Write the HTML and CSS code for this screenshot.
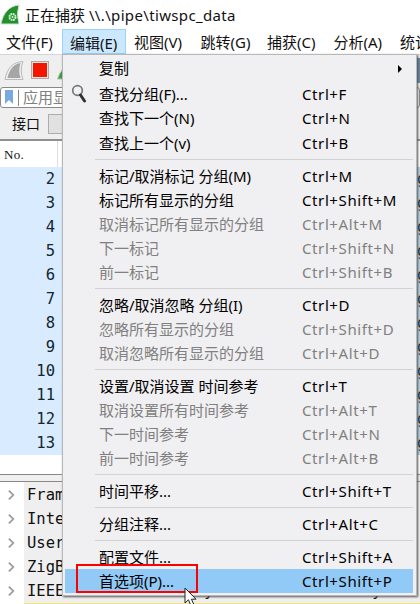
FILE: index.html
```html
<!DOCTYPE html>
<html lang="zh-CN">
<head>
<meta charset="utf-8">
<title>正在捕获</title>
<link rel="stylesheet" href="styles.css">
</head>
<body>
<div class="window">
  <header class="titlebar">
    <svg class="logo" width="21" height="22" viewBox="0 0 21 22"><path d="M1 20C3 9 9 2 19 1Q16 10 19 20Z" fill="#20912b" stroke="#d2dfd2"/><circle cx="12.5" cy="13" r="3" fill="none" stroke="#d8f3da" stroke-width="2" stroke-dasharray="1.7 .65"/><circle cx="12.5" cy="13" r="1" fill="#d8f3da"/></svg>
    <span>正在捕获 <span class="path">\\.\pipe\tiwspc_data</span></span>
  </header>
  <nav class="menubar">
    <span class="tab">文件(F)</span><span class="tab active">编辑(E)</span><span class="tab">视图(V)</span><span class="tab">跳转(G)</span><span class="tab">捕获(C)</span><span class="tab">分析(A)</span><span class="tab">统计(S)</span>
  </nav>
  <div class="toolbar">
    <svg width="64" height="32" viewBox="0 0 64 32"><path d="M5 24.500C7 13 13 7 23 6.500Q19.500 15 23 24.500Z" fill="#eee" stroke="#bbb"/><path d="M7.500 23C9.500 14 14 9 20.500 8Q18 16 20.500 23Z" fill="#a6a6a6"/><rect x="31.500" y="6.500" width="17" height="17" fill="#e5e3e2" stroke="#aaa"/><rect x="33" y="8" width="14" height="14" fill="#f31600"/><path d="M57.500 24Q59 18 64 13V24Z" fill="#38a33c" stroke="#bbb"/></svg>
    <i class="edge-mark"></i>
  </div>
  <div class="filter">
    <svg width="18" height="20" viewBox="0 0 18 20"><path d="M4 2h8v14l-4-4-4 4z" fill="#79a9df"/><path d="M17.500 2v16" stroke="#888"/></svg>
    <span>应用显示过滤器</span>
  </div>
  <div class="interface"><span>接口</span><i class="combo"></i></div>
  <div class="list-head"><span>No.</span></div>
  <div class="packets">
    <div class="packet"><span>2</span><b>g</b></div>
    <div class="packet"><span>3</span><b>g</b></div>
    <div class="packet"><span>4</span><b>g</b></div>
    <div class="packet"><span>5</span><b>g</b></div>
    <div class="packet"><span>6</span><b>g</b></div>
    <div class="packet"><span>7</span><b>g</b></div>
    <div class="packet"><span>8</span><b>g</b></div>
    <div class="packet"><span>9</span><b>g</b></div>
    <div class="packet"><span>10</span><b>g</b></div>
    <div class="packet"><span>11</span><b>g</b></div>
    <div class="packet"><span>12</span><b>g</b></div>
    <div class="packet"><span>13</span><b>g</b></div>
  </div>
  <div class="splitter"></div>
  <div class="tree">
    <div class="node"><svg class="chev" viewBox="0 0 8 12"><path d="M1 1l5 5-5 5"/></svg><span>Frame</span></div>
    <div class="node"><svg class="chev" viewBox="0 0 8 12"><path d="M1 1l5 5-5 5"/></svg><span>Inter</span></div>
    <div class="node"><svg class="chev" viewBox="0 0 8 12"><path d="M1 1l5 5-5 5"/></svg><span>User</span></div>
    <div class="node"><svg class="chev" viewBox="0 0 8 12"><path d="M1 1l5 5-5 5"/></svg><span>ZigBee</span></div>
    <div class="node"><svg class="chev" viewBox="0 0 8 12"><path d="M1 1l5 5-5 5"/></svg><span>IEEE               y                 y</span></div>
    <div class="selected"></div>
  </div>

  <div class="menu">
    <div class="item first"><span>复制</span><i class="arrow"></i></div>
    <div class="item"><svg class="find" width="18" height="20" viewBox="0 0 18 20"><circle cx="6.500" cy="6.500" r="4.800" fill="#edf3f4" stroke="#777" stroke-width="1.700"/><path d="M9.500 11l4 6" stroke="#333" stroke-width="3" stroke-linecap="round"/></svg><span>查找分组(F)...</span><kbd>Ctrl+F</kbd></div>
    <div class="item third"><span>查找下一个(N)</span><kbd>Ctrl+N</kbd></div>
    <div class="item"><span>查找上一个(v)</span><kbd>Ctrl+B</kbd></div>
    <hr>
    <div class="item"><span>标记/取消标记 分组(M)</span><kbd>Ctrl+M</kbd></div>
    <div class="item"><span>标记所有显示的分组</span><kbd>Ctrl+Shift+M</kbd></div>
    <div class="item off"><span>取消标记所有显示的分组</span><kbd>Ctrl+Alt+M</kbd></div>
    <div class="item off"><span>下一标记</span><kbd>Ctrl+Shift+N</kbd></div>
    <div class="item off"><span>前一标记</span><kbd>Ctrl+Shift+B</kbd></div>
    <hr>
    <div class="item"><span>忽略/取消忽略 分组(I)</span><kbd>Ctrl+D</kbd></div>
    <div class="item off"><span>忽略所有显示的分组</span><kbd>Ctrl+Shift+D</kbd></div>
    <div class="item off"><span>取消忽略所有显示的分组</span><kbd>Ctrl+Alt+D</kbd></div>
    <hr>
    <div class="item"><span>设置/取消设置 时间参考</span><kbd>Ctrl+T</kbd></div>
    <div class="item off"><span>取消设置所有时间参考</span><kbd>Ctrl+Alt+T</kbd></div>
    <div class="item off"><span>下一时间参考</span><kbd>Ctrl+Alt+N</kbd></div>
    <div class="item off"><span>前一时间参考</span><kbd>Ctrl+Alt+B</kbd></div>
    <hr>
    <div class="item"><span>时间平移...</span><kbd>Ctrl+Shift+T</kbd></div>
    <hr>
    <div class="item"><span>分组注释...</span><kbd>Ctrl+Alt+C</kbd></div>
    <hr>
    <div class="item"><span>配置文件...</span><kbd>Ctrl+Shift+A</kbd></div>
    <div class="item hover"><span>首选项(P)...</span><kbd>Ctrl+Shift+P</kbd></div>
  </div>
  <div class="callout"></div>
  <svg class="cursor" width="14" height="20" viewBox="0 0 14 20"><path d="M1 1v15l3.500-3.200L7 19l3-1.300-2.600-5.500H12z" fill="#fff" stroke="#222"/></svg>
</div>
</body>
</html>
```
FILE: styles.css
```css
* { box-sizing: border-box; }
body { margin: 0; overflow: hidden; }
.window {
  position: relative;
  width: 420px;
  height: 604px;
  overflow: hidden;
  background: #f0eff0;
  color: #111;
  font: 15px/24px "Noto Sans", "Noto Sans CJK SC", sans-serif;
  white-space: nowrap;
}
.titlebar { display: flex; align-items: center; height: 29px; gap: 4px; background: #fff; }
.path { letter-spacing: .35px; }
.menubar { display: flex; height: 25px; background: #fff; }
.tab { flex: none; width: 66.500px; padding-left: 8px; line-height: 27px; }
.tab:first-child { width: 62px; padding-left: 6px; }
.tab.active { width: 64px; padding-left: 7px; background: #cce8ff; border: 1px solid #99d1ff; line-height: 26px; }
.toolbar { display: flex; justify-content: space-between; height: 33px; border-top: 1px solid #d5d5d5; }
.edge-mark { width: 3px; height: 25px; margin-top: 3px; background: #6287a6; }
.filter { display: flex; height: 21px; border: 1px solid #888; border-radius: 3px; background: #fff; color: #808080; line-height: 18px; gap: 4px; }
.interface { display: flex; align-items: center; height: 33px; padding-left: 12px; gap: 8px; font-size: 14px; border-bottom: 2px solid #909090; }
.combo { width: 360px; height: 20px; background: #e1e1e1; border: 1px solid #adadad; margin-top: 1px; }
.list-head { height: 26px; padding-left: 4px; background: #fff; font: 13px/27px "Liberation Serif", serif; }
.list-head span { display: block; width: 54px; border-right: 1px solid #ddd; letter-spacing: .3px; }
.packets { height: 307px; background: #fff; font-family: "DejaVu Sans Mono", monospace; }
.packet { display: flex; justify-content: space-between; height: 24px; background: #d9ebff; color: #12272e; font-size: 15.500px; }
.packet span { width: 55px; text-align: right; }
.packet b { width: 3px; overflow: hidden; font-weight: 400; background: #b6d0e8; }
.splitter { height: 8px; border: solid #888; border-width: 1px 0; background: #f0f0f0; }
.tree { height: 122px; padding-top: 1px; background: linear-gradient(90deg, #fff 24px, #f0eff0 24px); font-family: "DejaVu Sans Mono", monospace; font-size: 15.500px; }
.node { display: flex; align-items: center; height: 24px; padding-left: 8px; gap: 12px; white-space: pre; }
.chev { width: 7px; height: 12px; fill: none; stroke: #999; stroke-width: 2; }
.selected { height: 3px; margin-left: 24px; background: #f2e66f; }
.menu { position: absolute; left: 62px; top: 54px; width: 355px; height: 542px; padding: 1px 3px 2px 2px; background: #f0eff1; border: 1px solid #b8b8b8; box-shadow: 1px 1px 2px #555; }
.item { position: relative; display: grid; grid-template-columns: 203px 1fr; height: 24px; padding-left: 34px; line-height: 24px; color: #000; }
.item.first { height: 26px; }
.item.third { height: 25px; }
.item.off { color: #808080; }
.item.hover { background: #91c9f7; }
.menu hr { height: 1px; margin: 4px 0 4px 30px; border: 0; background: #d2d2d2; }
kbd { font: inherit; letter-spacing: .6px; }
.arrow { justify-self: end; width: 0; height: 0; margin: 9px 11px 0 0; border: 4px solid transparent; border-left: 4px solid #000; border-right: 0; }
.find { position: absolute; left: 6px; top: 2px; }
.callout { position: absolute; left: 76px; top: 564px; width: 122px; height: 29px; border: 2px solid #f00; }
.cursor { position: absolute; left: 184px; top: 587px; }
```
